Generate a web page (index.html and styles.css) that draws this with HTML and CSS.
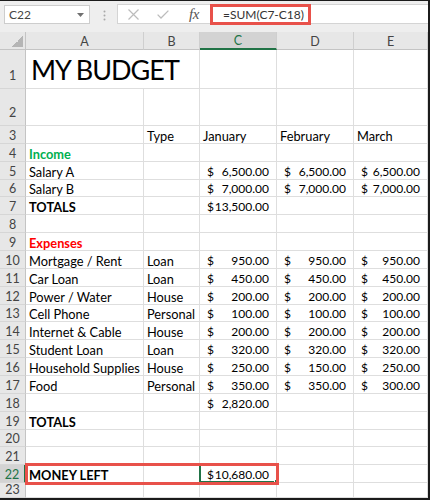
FILE: index.html
```html
<!DOCTYPE html>
<html>
<head>
<meta charset="utf-8">
<link rel="stylesheet" href="styles.css">
</head>
<body>
<div class="frame">
  <div class="toolbar">
    <div class="namebox"><span>C22</span><svg class="caret" width="7" height="4" viewBox="0 0 7 4"><path d="M0 0 L7 0 L3.5 4 Z" fill="#707070"/></svg></div>
    <svg class="grip" width="3" height="11" viewBox="0 0 3 11"><circle cx="1.5" cy="1.5" r="1" fill="#a8a8a8"/><circle cx="1.5" cy="5.5" r="1" fill="#a8a8a8"/><circle cx="1.5" cy="9.5" r="1" fill="#a8a8a8"/></svg>
    <div class="fbar">
      <div class="fbtns">
        <svg class="ico-x" width="11" height="11" viewBox="0 0 11 11"><path d="M0.5 0.5 L10.5 10.5 M10.5 0.5 L0.5 10.5" stroke="#bcbcbc" stroke-width="1.2" fill="none"/></svg>
        <svg class="ico-ok" width="12" height="9" viewBox="0 0 12 9"><path d="M0.6 4.6 L4 8 L11.4 0.6" stroke="#bcbcbc" stroke-width="1.3" fill="none"/></svg>
        <span class="fx">fx</span>
      </div>
      <div class="formula"><span class="fhl">=SUM(C7-C18)</span></div>
    </div>
  </div>
  <div class="sheet">
    <div class="corner"><span class="tri"></span></div>
    <div class="ch">A</div><div class="ch">B</div><div class="ch sel">C</div><div class="ch">D</div><div class="ch">E</div>

    <div class="rh t1">1</div><div class="c big span2">MY BUDGET</div><div class="c"></div><div class="c"></div><div class="c"></div>
    <div class="rh t2">2</div><div class="c"></div><div class="c"></div><div class="c"></div><div class="c"></div><div class="c"></div>
    <div class="rh">3</div><div class="c"></div><div class="c">Type</div><div class="c">January</div><div class="c">February</div><div class="c">March</div>
    <div class="rh">4</div><div class="c b g">Income</div><div class="c"></div><div class="c"></div><div class="c"></div><div class="c"></div>
    <div class="rh">5</div><div class="c">Salary A</div><div class="c"></div><div class="c n"><span>$</span><span>6,500.00</span></div><div class="c n"><span>$</span><span>6,500.00</span></div><div class="c n"><span>$</span><span>6,500.00</span></div>
    <div class="rh">6</div><div class="c">Salary B</div><div class="c"></div><div class="c n"><span>$</span><span>7,000.00</span></div><div class="c n"><span>$</span><span>7,000.00</span></div><div class="c n"><span>$</span><span>7,000.00</span></div>
    <div class="rh">7</div><div class="c b">TOTALS</div><div class="c"></div><div class="c n"><span>$</span><span>13,500.00</span></div><div class="c"></div><div class="c"></div>
    <div class="rh">8</div><div class="c"></div><div class="c"></div><div class="c"></div><div class="c"></div><div class="c"></div>
    <div class="rh">9</div><div class="c b r">Expenses</div><div class="c"></div><div class="c"></div><div class="c"></div><div class="c"></div>
    <div class="rh">10</div><div class="c">Mortgage / Rent</div><div class="c">Loan</div><div class="c n"><span>$</span><span>950.00</span></div><div class="c n"><span>$</span><span>950.00</span></div><div class="c n"><span>$</span><span>950.00</span></div>
    <div class="rh">11</div><div class="c">Car Loan</div><div class="c">Loan</div><div class="c n"><span>$</span><span>450.00</span></div><div class="c n"><span>$</span><span>450.00</span></div><div class="c n"><span>$</span><span>450.00</span></div>
    <div class="rh">12</div><div class="c">Power / Water</div><div class="c">House</div><div class="c n"><span>$</span><span>200.00</span></div><div class="c n"><span>$</span><span>200.00</span></div><div class="c n"><span>$</span><span>200.00</span></div>
    <div class="rh">13</div><div class="c">Cell Phone</div><div class="c">Personal</div><div class="c n"><span>$</span><span>100.00</span></div><div class="c n"><span>$</span><span>100.00</span></div><div class="c n"><span>$</span><span>100.00</span></div>
    <div class="rh">14</div><div class="c">Internet &amp; Cable</div><div class="c">House</div><div class="c n"><span>$</span><span>200.00</span></div><div class="c n"><span>$</span><span>200.00</span></div><div class="c n"><span>$</span><span>200.00</span></div>
    <div class="rh">15</div><div class="c">Student Loan</div><div class="c">Loan</div><div class="c n"><span>$</span><span>320.00</span></div><div class="c n"><span>$</span><span>320.00</span></div><div class="c n"><span>$</span><span>320.00</span></div>
    <div class="rh">16</div><div class="c">Household Supplies</div><div class="c">House</div><div class="c n"><span>$</span><span>250.00</span></div><div class="c n"><span>$</span><span>150.00</span></div><div class="c n"><span>$</span><span>250.00</span></div>
    <div class="rh">17</div><div class="c">Food</div><div class="c">Personal</div><div class="c n"><span>$</span><span>350.00</span></div><div class="c n"><span>$</span><span>350.00</span></div><div class="c n"><span>$</span><span>300.00</span></div>
    <div class="rh">18</div><div class="c"></div><div class="c"></div><div class="c n"><span>$</span><span>2,820.00</span></div><div class="c"></div><div class="c"></div>
    <div class="rh">19</div><div class="c b">TOTALS</div><div class="c"></div><div class="c"></div><div class="c"></div><div class="c"></div>
    <div class="rh">20</div><div class="c"></div><div class="c"></div><div class="c"></div><div class="c"></div><div class="c"></div>
    <div class="rh">21</div><div class="c"></div><div class="c"></div><div class="c"></div><div class="c"></div><div class="c"></div>
    <div class="rh sel r22 k0">22</div><div class="c b r22 k1">MONEY LEFT</div><div class="c r22 k2"></div><div class="c n r22 k3"><span>$</span><span>10,680.00</span></div><div class="c r22 k4"></div><div class="c r22 k5"></div>
    <div class="rh">23</div><div class="c"></div><div class="c"></div><div class="c"></div><div class="c"></div><div class="c"></div>

    <div class="active r22 k3"><span class="handle"></span></div>
    <div class="mark"></div>
  </div>
</div>
</body>
</html>
```
FILE: styles.css
```css
* { box-sizing: border-box; }
html, body { margin: 0; padding: 0; }
body {
  width: 430px;
  height: 500px;
  overflow: hidden;
  background: #fff;
  font-family: Lato, "Liberation Sans", sans-serif;
  font-size: 12.8px;
  color: #000;
}
.frame {
  width: 430px;
  height: 500px;
  border-top: 1px solid #1b1b1b;
  border-right: 2px solid #1b1b1b;
  border-bottom: 2px solid #1b1b1b;
  display: flex;
  flex-direction: column;
  overflow: hidden;
}
.toolbar {
  flex: none;
  height: 31px;
  background: #eeeeee;
  display: flex;
  align-items: flex-start;
  padding: 4px 0 0 4px;
}
.namebox {
  width: 86px;
  height: 19px;
  background: #fff;
  border: 1px solid #cdcdcd;
  display: flex;
  align-items: center;
  justify-content: space-between;
  padding: 0 5px 0 4px;
  color: #444;
  font-size: 12px;
  line-height: 14px;
}
.caret { display: block; }
.grip { display: block; margin: 5px 11px 0 13px; }
.fbar {
  flex: 1;
  height: 20px;
  margin-top: -1px;
  background: #fff;
  border: 1px solid #d4d4d4;
  border-right: none;
  display: flex;
  align-items: center;
}
.fbtns {
  width: 92px;
  height: 100%;
  display: flex;
  align-items: center;
  padding-left: 10px;
}
.ico-x { display: block; margin-right: 18px; }
.ico-ok { display: block; margin-right: 20px; }
.fx {
  font-family: "Liberation Serif", serif;
  font-style: italic;
  font-size: 15px;
  color: #555;
  line-height: 14px;
  letter-spacing: -0.5px;
}
.formula {
  flex: 1;
  height: 100%;
  display: flex;
  align-items: center;
}
.fhl {
  width: 101px;
  height: 21px;
  border: 3px solid #e8514a;
  padding-left: 10px;
  display: flex;
  align-items: center;
  color: #333;
  font-size: 12px;
  white-space: nowrap;
}
.sheet {
  flex: 1;
  display: grid;
  grid-template-columns: 26px 118px 56px 77px 77px 74px;
  grid-template-rows: 18px 39px 37px repeat(20, 17.86px) 1fr;
  background: #fff;
}
.corner, .ch, .rh {
  background: #e7e7e7;
  color: #444;
  display: flex;
  align-items: flex-end;
  justify-content: center;
  line-height: 14px;
  font-size: 12.5px;
}
.corner {
  border-right: 1px solid #c4c4c4;
  border-bottom: 1px solid #c4c4c4;
  justify-content: flex-end;
  padding: 0 2px 2px 0;
}
.tri {
  width: 11px;
  height: 11px;
  background: linear-gradient(135deg, transparent 50%, #b5b5b5 50%);
}
.ch {
  border-right: 1px solid #cfcfcf;
  border-bottom: 1px solid #c4c4c4;
}
.ch.sel {
  background: #d3d3d3;
  color: #217346;
  border-bottom: 2px solid #217346;
}
.rh {
  border-right: 1px solid #c4c4c4;
  border-bottom: 1px solid #d6d6d6;
}
.rh.sel {
  background: #d3d3d3;
  color: #217346;
  border-right: 2px solid #217346;
}
.t1 { padding-bottom: 5px; }
.t2 { padding-bottom: 5px; }
.c {
  border-right: 1px solid #dedede;
  border-bottom: 1px solid #dedede;
  display: flex;
  align-items: flex-end;
  padding: 0 3px;
  white-space: nowrap;
  line-height: 14px;
}
.span2 { grid-column: span 2; }
.big {
  font-size: 27px;
  letter-spacing: -1px;
  line-height: 30px;
  padding-left: 5px;
  padding-bottom: 3px;
}
.n {
  justify-content: space-between;
  padding: 0 7px 0 7px;
  font-size: 12px;
}
.b { font-weight: 700; }
.g { color: #00b050; }
.r { color: #ff0000; }
.r22 { grid-row: 23; }
.k0 { grid-column: 1; }
.k1 { grid-column: 2; }
.k2 { grid-column: 3; }
.k3 { grid-column: 4; }
.k4 { grid-column: 5; }
.k5 { grid-column: 6; }
.active {
  margin: -1px -1px 0 -1px;
  border: 2px solid #217346;
  z-index: 1;
  display: flex;
  justify-content: flex-end;
  align-items: flex-end;
}
.handle {
  width: 5px;
  height: 5px;
  background: #217346;
  margin: 0 -3px -3px 0;
  border: 1px solid #fff;
}
.mark {
  grid-row: 23;
  grid-column: 2 / 5;
  margin: -2px -2px -2px -1px;
  border: 3px solid #e8514a;
  z-index: 2;
}
```
